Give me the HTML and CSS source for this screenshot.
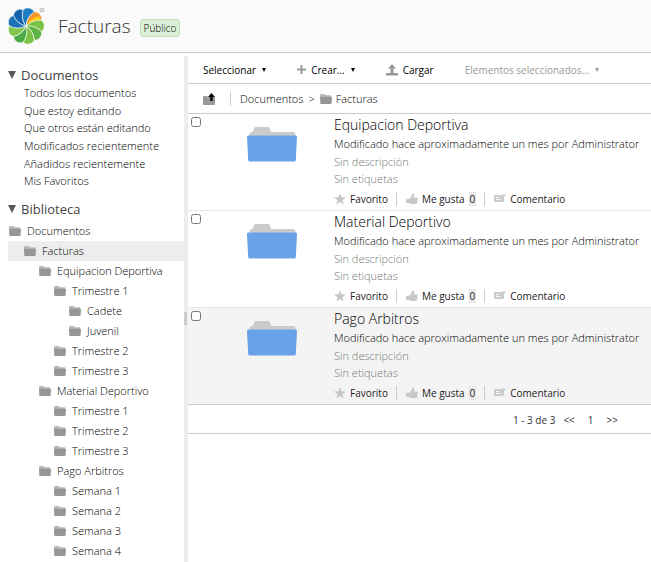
FILE: index.html
```html
<!DOCTYPE html>
<html lang="es">
<head>
<meta charset="utf-8">
<title>Facturas</title>
<link rel="stylesheet" href="styles.css">
</head>
<body>
<svg width="0" height="0" class="defs" aria-hidden="true">
  <symbol id="folder" viewBox="0 0 12 10"><path fill="#b9b9b9" d="M0 1.2Q0 0 1 0H4.5Q5.5 0 5.5 1.2H10.5Q11.2 1.2 11.2 2V4H0z"/><path fill="#969696" d="M0 3.2Q0 2.8.6 2.8H11.4Q12 2.8 12 3.4L11.6 9.3Q11.5 10 10.9 10H1Q.3 10 .3 9.3z"/></symbol>
  <symbol id="bigfolder" viewBox="0 0 50 35"><path fill="#cbcbcb" d="M2.5 12V7Q2.5 5.400 4.500 5.200Q6 5 6.300 3.500L7 1.500Q7.400 0 9 0H21Q22.500 0 23 1.500L24 5H46Q48.500 5 48.500 7.500V12z"/><path fill="#6aa2e8" d="M0 10Q0 8.500 1.500 8.500H48.500Q50 8.500 50 10L48.800 33Q48.700 34.500 47.200 34.500H2.800Q1.300 34.500 1.200 33z"/></symbol>
  <symbol id="star" viewBox="0 0 12 12"><path fill="#c6c6c6" d="M6 0L7.500 4.300L12 4.400L8.400 7.200L9.700 11.600L6 9L2.300 11.600L3.600 7.200L0 4.400L4.500 4.300z"/></symbol>
  <symbol id="thumb" viewBox="0 0 12 11"><path fill="#c8c8c8" d="M0 6.200Q0 5.200 1 5.200H3.200Q5.800 3.600 6 .8Q6.300 0 7.200.1Q8.500.6 7.800 4H11Q12 4.200 11.800 5.300L11 9.400Q10.700 10.400 9.700 10.400H4.500L3.200 9.600H1Q0 9.600 0 8.700z"/></symbol>
  <symbol id="comment" viewBox="0 0 12 10"><path fill="#cbcbcb" d="M1 1H7L8 .5H12L10 3V7Q10 8 9 8H1Q0 8 0 7V2Q0 1 1 1z"/><path stroke="#f5f5f5" d="M2 3.500H5M2 5.500H7"/></symbol>
</svg>

<header class="header">
  <svg class="logo" viewBox="0 0 40 38" role="img" aria-label="Alfresco">
    <defs><path id="petal" d="M0 0Q-4-8 0-16.500A7 7 0 0 1 10.600-12.640Q2.080-8.700 0 0z"/></defs>
    <g transform="translate(19 19)" stroke="#fafafa" stroke-width=".6">
      <use href="#petal" fill="#f7942e" transform="rotate(30)"/>
      <path fill="#fcd30c" stroke="none" transform="rotate(30)" d="M0 0Q0-9 6.500-15L10-12.300Q2.080-8.700 0 0z"/>
      <use href="#petal" fill="#7cc242" transform="rotate(70)"/>
      <use href="#petal" fill="#5fb446" transform="rotate(110)"/>
      <use href="#petal" fill="#7cc242" transform="rotate(150)"/>
      <use href="#petal" fill="#4aaa47" transform="rotate(190)"/>
      <use href="#petal" fill="#82c54a" transform="rotate(230)"/>
      <use href="#petal" fill="#1b70b8" transform="rotate(270)"/>
      <use href="#petal" fill="#1563ad" transform="rotate(310)"/>
      <use href="#petal" fill="#1d7cc4" transform="rotate(350)"/>
    </g>
    <circle cx="35" cy="3" r="2" fill="#ddd" stroke="#aaa" stroke-width=".7"/>
  </svg>
  <h1>Facturas</h1>
  <span class="badge">Público</span>
</header>

<div class="body">
  <nav class="sidebar">
    <h2><i class="twister"></i>Documentos</h2>
    <ul class="filters">
      <li><a href="#">Todos los documentos</a></li>
      <li><a href="#">Que estoy editando</a></li>
      <li><a href="#">Que otros están editando</a></li>
      <li><a href="#">Modificados recientemente</a></li>
      <li><a href="#">Añadidos recientemente</a></li>
      <li><a href="#">Mis Favoritos</a></li>
    </ul>
    <h2><i class="twister"></i>Biblioteca</h2>
    <ul class="tree">
      <li><a href="#"><svg><use href="#folder"/></svg>Documentos</a>
        <ul>
          <li><a href="#" class="selected level1"><svg><use href="#folder"/></svg>Facturas</a>
            <ul>
              <li><a href="#"><svg><use href="#folder"/></svg>Equipacion Deportiva</a>
                <ul>
                  <li><a href="#"><svg><use href="#folder"/></svg>Trimestre 1</a>
                    <ul>
                      <li><a href="#"><svg><use href="#folder"/></svg>Cadete</a></li>
                      <li><a href="#"><svg><use href="#folder"/></svg>Juvenil</a></li>
                    </ul>
                  </li>
                  <li><a href="#"><svg><use href="#folder"/></svg>Trimestre 2</a></li>
                  <li><a href="#"><svg><use href="#folder"/></svg>Trimestre 3</a></li>
                </ul>
              </li>
              <li><a href="#"><svg><use href="#folder"/></svg>Material Deportivo</a>
                <ul>
                  <li><a href="#"><svg><use href="#folder"/></svg>Trimestre 1</a></li>
                  <li><a href="#"><svg><use href="#folder"/></svg>Trimestre 2</a></li>
                  <li><a href="#"><svg><use href="#folder"/></svg>Trimestre 3</a></li>
                </ul>
              </li>
              <li><a href="#"><svg><use href="#folder"/></svg>Pago Arbitros</a>
                <ul>
                  <li><a href="#"><svg><use href="#folder"/></svg>Semana 1</a></li>
                  <li><a href="#"><svg><use href="#folder"/></svg>Semana 2</a></li>
                  <li><a href="#"><svg><use href="#folder"/></svg>Semana 3</a></li>
                  <li><a href="#"><svg><use href="#folder"/></svg>Semana 4</a></li>
                </ul>
              </li>
            </ul>
          </li>
        </ul>
      </li>
    </ul>
  </nav>
  <div class="splitter"><i></i></div>
  <main>
    <div class="toolbar">
      <button type="button">Seleccionar<i class="caret"></i></button>
      <button type="button"><svg class="plus" viewBox="0 0 9 9"><path d="M4.500 0V9M0 4.500H9" stroke="#999" stroke-width="2"/></svg>Crear...<i class="caret"></i></button>
      <button type="button"><svg class="upload" viewBox="0 0 12 12"><path fill="#999" d="M6 0L10 4.500H7.500V9H4.500V4.500H2zM0 9H12V11.500H0z"/></svg>Cargar</button>
      <button type="button" disabled>Elementos seleccionados...<i class="caret"></i></button>
    </div>
    <div class="crumbs">
      <a href="#" class="up" aria-label="Subir"><svg viewBox="0 0 12 12"><path fill="#999" d="M0 4Q0 3 1 3H4L5 4H12V11Q12 12 11 12H1Q0 12 0 11z"/><path fill="#000" d="M8.500 0L12 4H9.700V8H7.300V4H5z"/></svg></a>
      <a href="#">Documentos</a><span class="sep">&gt;</span><a href="#" class="current"><svg><use href="#folder"/></svg>Facturas</a>
    </div>
    <article class="row">
      <input type="checkbox" aria-label="Equipacion Deportiva">
      <svg class="thumbnail"><use href="#bigfolder"/></svg>
      <div class="info">
        <h3><a href="#">Equipacion Deportiva</a></h3>
        <p>Modificado hace aproximadamente un mes por Administrator</p>
        <p class="faded">Sin descripción</p>
        <p class="faded">Sin etiquetas</p>
        <div class="social"><a href="#"><svg><use href="#star"/></svg>Favorito</a><a href="#"><svg><use href="#thumb"/></svg>Me gusta<span class="count">0</span></a><a href="#"><svg><use href="#comment"/></svg>Comentario</a></div>
      </div>
    </article>
    <article class="row">
      <input type="checkbox" aria-label="Material Deportivo">
      <svg class="thumbnail"><use href="#bigfolder"/></svg>
      <div class="info">
        <h3><a href="#">Material Deportivo</a></h3>
        <p>Modificado hace aproximadamente un mes por Administrator</p>
        <p class="faded">Sin descripción</p>
        <p class="faded">Sin etiquetas</p>
        <div class="social"><a href="#"><svg><use href="#star"/></svg>Favorito</a><a href="#"><svg><use href="#thumb"/></svg>Me gusta<span class="count">0</span></a><a href="#"><svg><use href="#comment"/></svg>Comentario</a></div>
      </div>
    </article>
    <article class="row active">
      <input type="checkbox" aria-label="Pago Arbitros">
      <svg class="thumbnail"><use href="#bigfolder"/></svg>
      <div class="info">
        <h3><a href="#">Pago Arbitros</a></h3>
        <p>Modificado hace aproximadamente un mes por Administrator</p>
        <p class="faded">Sin descripción</p>
        <p class="faded">Sin etiquetas</p>
        <div class="social"><a href="#"><svg><use href="#star"/></svg>Favorito</a><a href="#"><svg><use href="#thumb"/></svg>Me gusta<span class="count">0</span></a><a href="#"><svg><use href="#comment"/></svg>Comentario</a></div>
      </div>
    </article>
    <div class="pager"><span>1 - 3 de 3</span><a href="#">&lt;&lt;</a><a href="#" class="page">1</a><a href="#">&gt;&gt;</a></div>
  </main>
</div>
</body>
</html>
```
FILE: styles.css
```css
* { box-sizing: border-box; }
body {
  margin: 0;
  min-height: 100vh;
  display: flex;
  flex-direction: column;
  background: #fff;
  color: #000;
  font: 10px/18px "Open Sans", "Noto Sans", sans-serif;
}
.defs { position: absolute; }
h1, h2, h3, p, ul { margin: 0; padding: 0; }
ul { list-style: none; }
a { color: inherit; text-decoration: none; }
svg { flex: none; }

.header {
  display: flex;
  align-items: center;
  height: 53px;
  padding-left: 7px;
  background: #fafafa;
  border-bottom: 1px solid #ccc;
}
.logo { width: 40px; height: 38px; }
h1 { margin: 0 9px 0 11px; font-size: 19px; line-height: 28px; font-weight: 300; color: #333; }
.badge {
  margin-top: 3px;
  padding: 0 3px;
  border: 1px solid #c5e0bd;
  border-radius: 3px;
  background: #dcefd7;
  font-weight: 300;
  line-height: 16px;
}

.body { flex: 1; display: flex; }
.sidebar { width: 184px; flex: none; padding: 13px 0 0 8px; }
.filters, .tree, .info p, .crumbs { font-size: 11px; font-weight: 300; }
h2 {
  display: flex;
  align-items: center;
  gap: 5px;
  font-size: 13px;
  line-height: 18px;
  font-weight: 400;
  color: #444;
}
.twister {
  border: 4px solid transparent;
  border-top: 8px solid #54595c;
  border-bottom: 0;
}
.filters {
  display: grid;
  grid-template-rows: repeat(6, 1fr);
  height: 106px;
  padding-left: 16px;
  margin-bottom: 10px;
}
.filters li { min-height: 0; }
.filters a { display: block; line-height: 17px; }
.tree { margin-top: 3px; }
.tree a { display: flex; align-items: center; gap: 6px; height: 20px; padding-left: 1px; }
.tree svg, .current svg { width: 12px; height: 10px; }
.tree ul { padding-left: 15px; }
.tree a.level1 { margin-left: -15px; padding-left: 16px; }
.selected { background: #ededed; }
.splitter { width: 4px; flex: none; margin-top: 3px; background: #ededed; }
.splitter i { display: block; width: 3px; height: 13px; margin-top: 256px; background: #ccc; }

main { flex: 1; min-width: 0; }
.toolbar { display: flex; align-items: center; height: 31px; padding: 3px 0 0 15px; gap: 31px; border-bottom: 1px solid #ccc; }
button {
  display: flex;
  align-items: center;
  gap: 5px;
  padding: 0;
  border: 0;
  background: none;
  color: #000;
  font: inherit;
  white-space: nowrap;
}
button:disabled { color: #999; }
.caret { margin-left: 1px; border: 2px solid transparent; border-top: 4px solid currentColor; border-bottom: 0; }
.plus { width: 9px; height: 9px; }
.upload { width: 12px; height: 12px; }
.crumbs { display: flex; align-items: center; height: 30px; padding-left: 15px; border-bottom: 1px solid #ccc; }
.up { display: flex; padding-right: 15px; margin-right: 9px; border-right: 1px solid #ccc; }
.up svg { width: 12px; height: 14px; }
.sep { margin: 0 5px; }
.current { display: flex; align-items: center; gap: 4px; }

.row { display: flex; align-items: flex-start; height: 97px; border-bottom: 1px solid #e8e8e8; }
.row.active { background: #f4f4f4; border-color: #ccc; }
.row input { width: 10px; height: 10px; margin: 3px 46px 0 3px; flex: none; }
.thumbnail { width: 50px; height: 35px; margin: 13px 37px 0 0; }
.info { flex: 1; min-width: 0; padding-top: 1px; white-space: nowrap; color: #000; }
h3 { font-size: 14px; line-height: 20px; font-weight: 300; color: #000; }
.info .faded { line-height: 17px; color: #777; }
.social { display: flex; align-items: center; margin-top: 5px; color: #222; }
.social a { display: flex; align-items: center; gap: 4px; line-height: 14px; }
.social a + a { margin-left: 8px; padding-left: 9px; border-left: 1px solid #ccc; }
.social svg { width: 12px; height: 12px; }
.count { padding: 0 1px; background: #e8e8e8; }
.pager { display: flex; justify-content: flex-end; align-items: center; gap: 8px; height: 29px; padding: 2px 33px 0 0; border-bottom: 1px solid #ccc; color: #333; }
.page { padding: 0 5px; }
```
